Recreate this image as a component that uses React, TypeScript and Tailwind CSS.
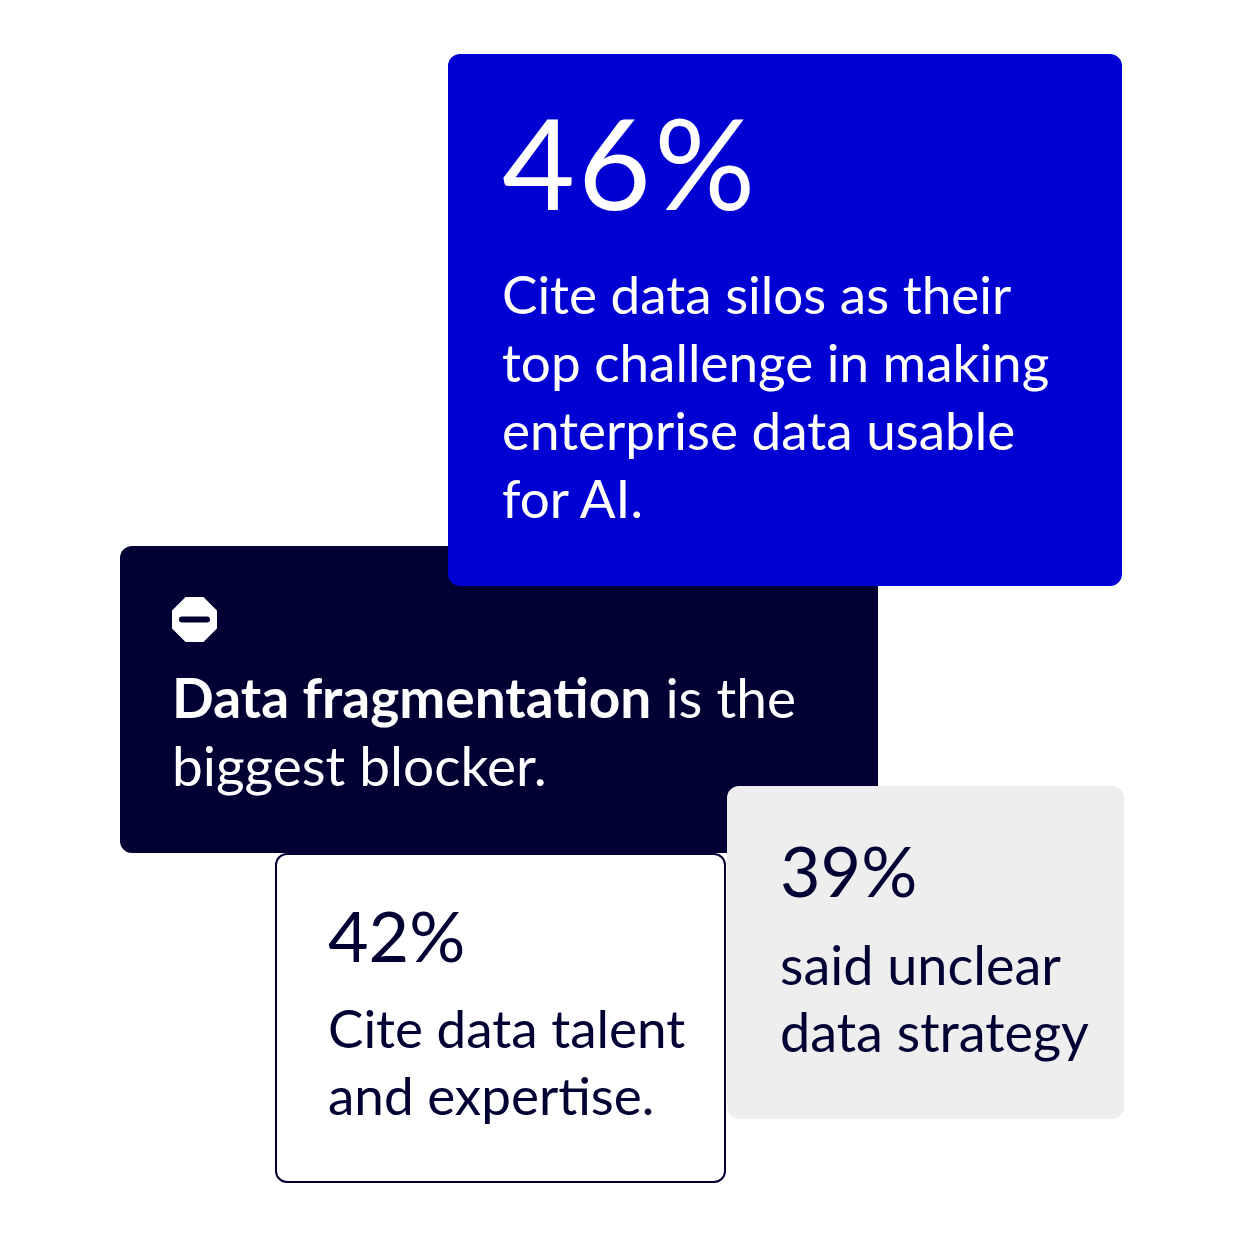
import React from "react";

const StopIcon = () => (
  <svg width="45" height="45" viewBox="0 0 45 45" aria-hidden="true">
    <path
      d="M14 1H31L44 14V31L31 44H14L1 31V14Z"
      fill="#ffffff"
      stroke="#ffffff"
      strokeWidth="2"
      strokeLinejoin="round"
    />
    <rect x="7" y="19.5" width="31" height="6" rx="3" fill="#000033" />
  </svg>
);

const App = () => {
  return (
    <div className="relative w-[1244px] h-[1238px] bg-white overflow-hidden font-['Lato','Liberation_Sans',sans-serif]">
      {/* overlapping stat cards on a free canvas; the dark one sits underneath */}
      <div className="absolute left-[120px] top-[546px] w-[758px] h-[307px] rounded-xl bg-[#000033] px-[52px] pt-[51px] text-white">
        <StopIcon />
        <p className="mt-[21px] text-[55px] leading-[68px] whitespace-nowrap">
          <strong className="font-bold">Data fragmentation</strong> is the
          <br />
          biggest blocker.
        </p>
      </div>

      <div className="absolute left-[448px] top-[54px] w-[674px] h-[532px] rounded-xl bg-[#0000d2] px-[54px] pt-[45px] text-white">
        <div className="text-[126px] leading-none tracking-[3px]">46%</div>
        <p className="mt-[35px] text-[53px] leading-[68px] whitespace-nowrap">
          Cite data silos as their
          <br />
          top challenge in making
          <br />
          enterprise data usable
          <br />
          for AI.
        </p>
      </div>

      <div className="absolute left-[275px] top-[853px] w-[451px] h-[330px] rounded-xl border-2 border-[#000033] bg-white px-[51px] pt-[45px] text-[#000033]">
        <div className="text-[70px] leading-none">42%</div>
        <p className="mt-[24px] text-[53px] leading-[67px] whitespace-nowrap">
          Cite data talent
          <br />
          and expertise.
        </p>
      </div>

      <div className="absolute left-[727px] top-[786px] w-[397px] h-[333px] rounded-xl bg-[#eeeeee] px-[53px] pt-[49px] text-[#000033]">
        <div className="text-[70px] leading-none">39%</div>
        <p className="mt-[26px] text-[54px] leading-[67px] whitespace-nowrap">
          said unclear
          <br />
          data strategy
        </p>
      </div>
    </div>
  );
};

export default App;
